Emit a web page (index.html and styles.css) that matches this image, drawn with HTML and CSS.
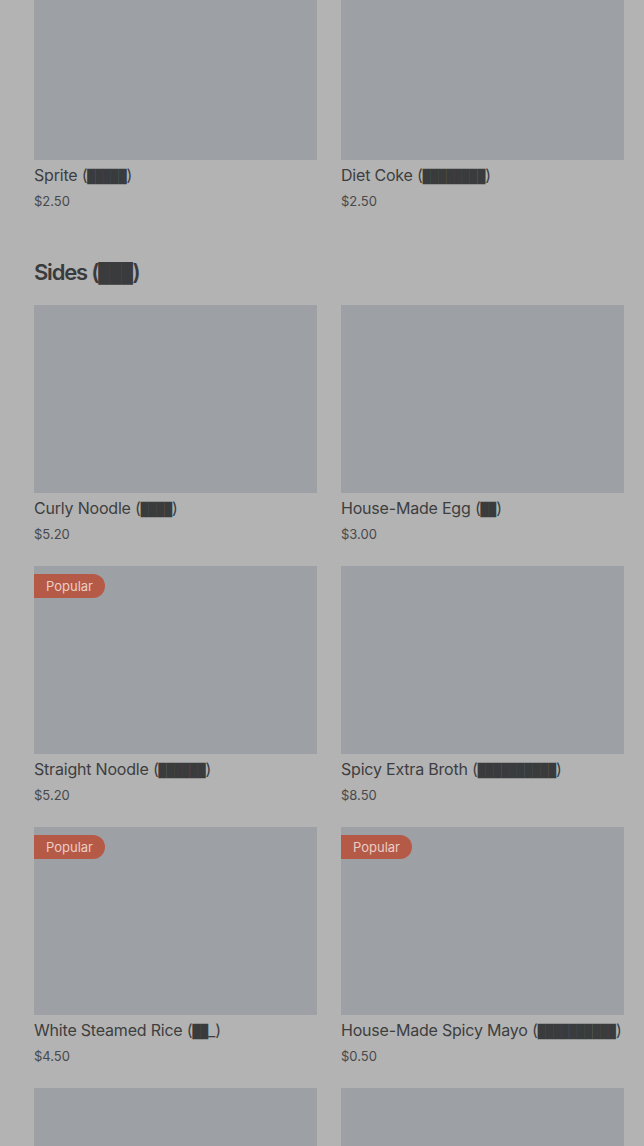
FILE: index.html
```html
<!DOCTYPE html>
<html>
<head>
<meta charset="utf-8">
<link rel="stylesheet" href="styles.css">
</head>
<body>
<main class="menu">
  <section class="section section-first">
    <div class="grid">
      <div class="card">
        <div class="thumb"></div>
        <div class="title">Sprite (<span class="blk">█████</span>)</div>
        <div class="price">$2.50</div>
      </div>
      <div class="card">
        <div class="thumb"></div>
        <div class="title">Diet Coke (<span class="blk">████████</span>)</div>
        <div class="price">$2.50</div>
      </div>
    </div>
  </section>
  <section class="section">
    <h2 class="heading">Sides (<span class="blk">███</span>)</h2>
    <div class="grid">
      <div class="card">
        <div class="thumb"></div>
        <div class="title">Curly Noodle (<span class="blk">████</span>)</div>
        <div class="price">$5.20</div>
      </div>
      <div class="card">
        <div class="thumb"></div>
        <div class="title">House-Made Egg (<span class="blk">██</span>)</div>
        <div class="price">$3.00</div>
      </div>
      <div class="card">
        <div class="thumb"><span class="badge">Popular</span></div>
        <div class="title">Straight Noodle (<span class="blk">██████</span>)</div>
        <div class="price">$5.20</div>
      </div>
      <div class="card">
        <div class="thumb"></div>
        <div class="title">Spicy Extra Broth (<span class="blk">██████████</span>)</div>
        <div class="price">$8.50</div>
      </div>
      <div class="card">
        <div class="thumb"><span class="badge">Popular</span></div>
        <div class="title">White Steamed Rice (<span class="blk">██</span>_)</div>
        <div class="price">$4.50</div>
      </div>
      <div class="card">
        <div class="thumb"><span class="badge">Popular</span></div>
        <div class="title">House-Made Spicy Mayo (<span class="blk">██████████</span>)</div>
        <div class="price">$0.50</div>
      </div>
      <div class="card">
        <div class="thumb"></div>
      </div>
      <div class="card">
        <div class="thumb"></div>
      </div>
    </div>
  </section>
</main>
</body>
</html>
```
FILE: styles.css
```css
html, body {
  margin: 0;
  padding: 0;
  background: #b3b3b3;
}
body {
  font-family: Inter, "Liberation Sans", sans-serif;
  color: #3d3e40;
  overflow: hidden;
  height: 1146px;
}
.menu {
  padding: 0 20px 0 34px;
}
.section-first {
  margin-top: -28px;
}
.section + .section {
  margin-top: 45px;
}
.heading {
  margin: 0 0 17px 0;
  height: 32px;
  font-size: 22px;
  line-height: 32px;
  font-weight: 600;
  letter-spacing: -1.2px;
  color: #3a3b3d;
}
.heading .blk {
  font-size: 19px;
}
.blk {
  font-family: "DejaVu Sans Mono", monospace;
  font-size: 13px;
  line-height: 10px;
  color: #3a3b3d;
  letter-spacing: 0;
}
.grid {
  display: grid;
  grid-template-columns: 283px 283px;
  column-gap: 24px;
  row-gap: 22px;
}
.card {
  display: flex;
  flex-direction: column;
}
.thumb {
  position: relative;
  height: 188px;
  background: #9da0a4;
}
.badge {
  position: absolute;
  left: 0;
  top: 8px;
  height: 24px;
  padding: 0 12px;
  display: flex;
  align-items: center;
  background: #b55a47;
  color: #ebcdc5;
  font-size: 13px;
  border-radius: 0 12px 12px 0;
}
.title {
  margin-top: 4px;
  height: 22px;
  font-size: 16px;
  line-height: 22px;
  font-weight: 400;
  letter-spacing: -0.2px;
  white-space: nowrap;
}
.price {
  margin-top: 5px;
  height: 20px;
  font-size: 13px;
  line-height: 20px;
  color: #48494b;
}
```
